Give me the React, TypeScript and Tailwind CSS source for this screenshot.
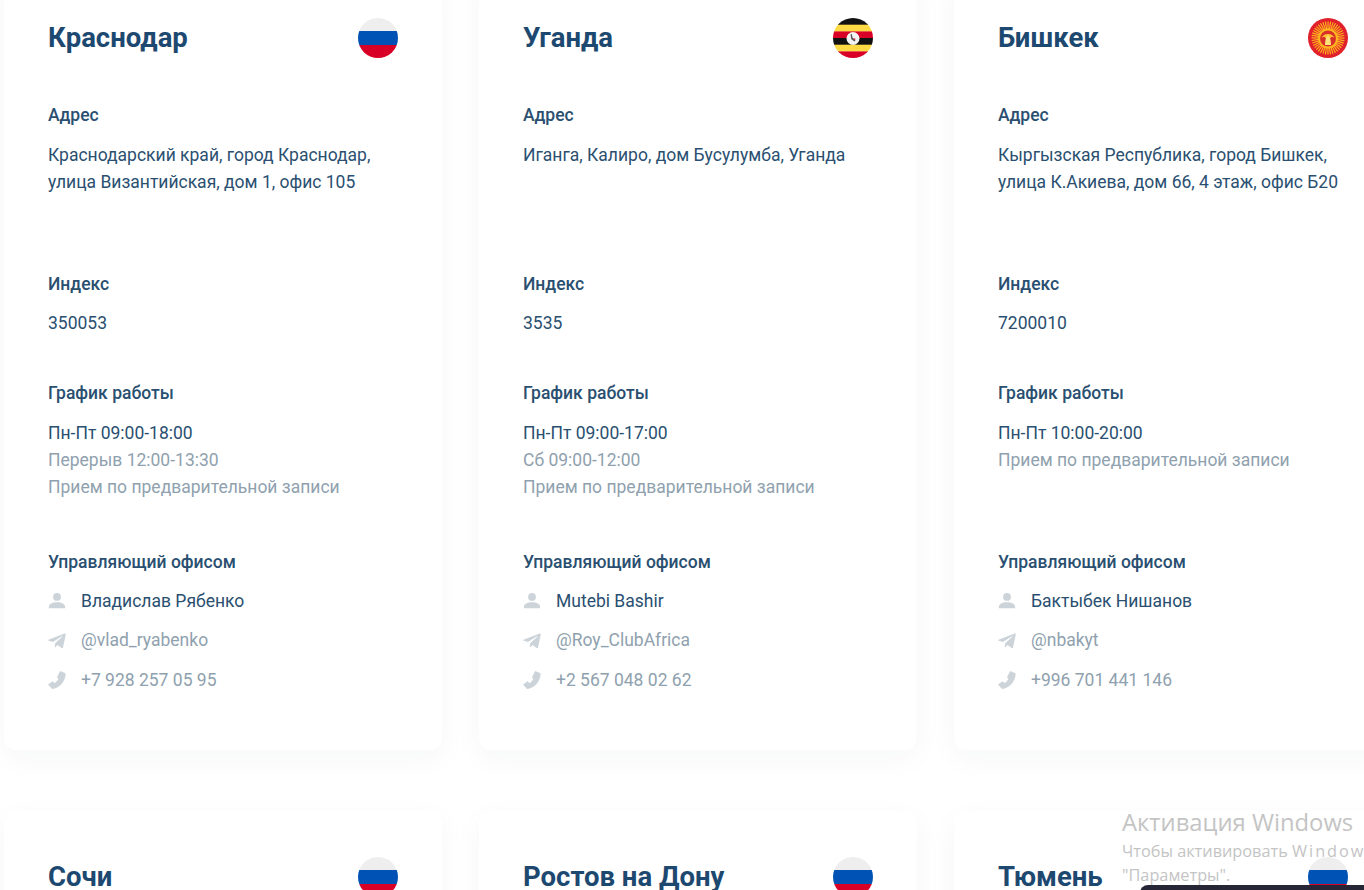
import { FaTelegramPlane } from 'react-icons/fa'

type Office = {
  city: string
  flag: 'ru' | 'ug' | 'kg'
  address: string[]
  zip: string
  hours: string[]
  manager: string
  telegram: string
  phone: string
}

const offices: Office[] = [
  {
    city: 'Краснодар',
    flag: 'ru',
    address: ['Краснодарский край, город Краснодар,', 'улица Византийская, дом 1, офис 105'],
    zip: '350053',
    hours: ['Пн-Пт 09:00-18:00', 'Перерыв 12:00-13:30', 'Прием по предварительной записи'],
    manager: 'Владислав Рябенко',
    telegram: '@vlad_ryabenko',
    phone: '+7 928 257 05 95',
  },
  {
    city: 'Уганда',
    flag: 'ug',
    address: ['Иганга, Калиро, дом Бусулумба, Уганда'],
    zip: '3535',
    hours: ['Пн-Пт 09:00-17:00', 'Сб 09:00-12:00', 'Прием по предварительной записи'],
    manager: 'Mutebi Bashir',
    telegram: '@Roy_ClubAfrica',
    phone: '+2 567 048 02 62',
  },
  {
    city: 'Бишкек',
    flag: 'kg',
    address: ['Кыргызская Республика, город Бишкек,', 'улица К.Акиева, дом 66, 4 этаж, офис Б20'],
    zip: '7200010',
    hours: ['Пн-Пт 10:00-20:00', 'Прием по предварительной записи'],
    manager: 'Бактыбек Нишанов',
    telegram: '@nbakyt',
    phone: '+996 701 441 146',
  },
]

const nextRow: { city: string; flag: Office['flag'] }[] = [
  { city: 'Сочи', flag: 'ru' },
  { city: 'Ростов на Дону', flag: 'ru' },
  { city: 'Тюмень', flag: 'ru' },
]

function Flag({ kind }: { kind: Office['flag'] }) {
  if (kind === 'ru') {
    return (
      <svg viewBox="0 0 40 40" className="h-10 w-10 shrink-0">
        <clipPath id="ru-clip">
          <circle cx="20" cy="20" r="20" />
        </clipPath>
        <g clipPath="url(#ru-clip)">
          <rect width="40" height="14" fill="#eeeeee" />
          <rect y="13" width="40" height="14" fill="#0052b4" />
          <rect y="27" width="40" height="13" fill="#d80027" />
        </g>
      </svg>
    )
  }
  if (kind === 'ug') {
    return (
      <svg viewBox="0 0 40 40" className="h-10 w-10 shrink-0">
        <clipPath id="ug-clip">
          <circle cx="20" cy="20" r="20" />
        </clipPath>
        <g clipPath="url(#ug-clip)">
          <rect width="40" height="7" fill="#111111" />
          <rect y="6.7" width="40" height="7" fill="#ffda44" />
          <rect y="13.4" width="40" height="7" fill="#d80027" />
          <rect y="20" width="40" height="7" fill="#111111" />
          <rect y="26.7" width="40" height="7" fill="#ffda44" />
          <rect y="33.4" width="40" height="7" fill="#d80027" />
        </g>
        <circle cx="20" cy="20.500" r="6.500" fill="#f4f4f4" />
        <path d="M17.500 16.500l1.200-.5 1 4 2.800 2.500-1 1-3.200-2.200z" fill="#555555" />
        <path d="M20 20l2.500.8-.5 1.400z" fill="#d80027" />
      </svg>
    )
  }
  const rays = Array.from({ length: 40 }, (_, i) => (i * 360) / 40)
  return (
    <svg viewBox="0 0 40 40" className="h-10 w-10 shrink-0">
      <circle cx="20" cy="20" r="20" fill="#e0202a" />
      {rays.map((angle) => (
        <rect key={angle} x="19.500" y="3.500" width="1.100" height="9" fill="#ffb81f" transform={`rotate(${angle} 20 20)`} />
      ))}
      <circle cx="20" cy="20.500" r="10" fill="#ffb81f" />
      <circle cx="20" cy="20.500" r="8" fill="#d9302a" />
      <path d="M13.500 20c2-5.500 11-5.500 13 0-3-2.500-4-2-6.500 6-2.500-8-3.500-8.500-6.500-6z" fill="#ffc93a" />
      <path d="M17 27c0-5 1-8 3-9 2 1 3 4 3 9z" fill="#ffe27a" />
    </svg>
  )
}

function UserIcon() {
  return (
    <svg viewBox="0 0 20 20" className="h-[18px] w-[18px] shrink-0" fill="currentColor">
      <circle cx="10" cy="5.500" r="4.300" />
      <path d="M1 18v-1.500c0-3 3.500-5 9-5s9 2 9 5V18z" />
    </svg>
  )
}

function PhoneIcon() {
  return (
    <svg viewBox="0 0 20 20" className="h-[18px] w-[18px] shrink-0" fill="currentColor">
      <path d="M13.500 0l6 2.500C20 11 13 19 4.500 20L0 15l5-3.500 2.500 2c1.500-1 3-2.500 4-4.500L10 7z" />
    </svg>
  )
}

function CardHeader({ city, flag }: { city: string; flag: Office['flag'] }) {
  return (
    <div className="flex h-10 items-center justify-between">
      <h2 className="text-[27.500px] leading-10 font-bold text-[#1d4971]">{city}</h2>
      <Flag kind={flag} />
    </div>
  )
}

function Section({ title, className, children }: { title: string; className: string; children: React.ReactNode }) {
  return (
    <div className={className}>
      <h3 className="mb-[13px] text-[17.500px] leading-[27px] font-medium text-[#2a4f70]">{title}</h3>
      {children}
    </div>
  )
}

function OfficeCard({ office }: { office: Office }) {
  return (
    <div className="h-[778px] w-[438px] shrink-0 rounded-xl bg-white pt-[46px] pr-11 pl-11 shadow-[0_8px_30px_rgba(30,50,80,0.04)]">
      <CardHeader city={office.city} flag={office.flag} />
      <div className="mt-11">
        <Section title="Адрес" className="h-[169px]">
          {office.address.map((line) => (
            <p key={line} className="whitespace-nowrap text-[17.500px] leading-[27px] text-[#2a4f70]">{line}</p>
          ))}
        </Section>
        <Section title="Индекс" className="h-[109px]">
          <p className="-mt-px text-[17.500px] leading-[27px] text-[#2a4f70]">{office.zip}</p>
        </Section>
        <Section title="График работы" className="h-[169px]">
          {office.hours.map((line, i) => (
            <p key={line} className={i === 0 ? 'text-[17.500px] leading-[27px] text-[#2a4f70]' : 'text-[17.500px] leading-[27px] text-[#8fa1ae]'}>
              {line}
            </p>
          ))}
        </Section>
        <h3 className="mb-[5px] text-[17.500px] leading-[27px] font-medium text-[#2a4f70]">Управляющий офисом</h3>
        <div className="flex h-10 items-center gap-[15px] text-[17.500px] text-[#2a4f70]">
          <span className="flex w-[18px] justify-center text-[#ccd4da]"><UserIcon /></span>
          {office.manager}
        </div>
        <div className="flex h-[39px] items-center gap-[15px] text-[17.500px] text-[#8fa1ae]">
          <span className="flex w-[18px] justify-center text-[#ccd4da]"><FaTelegramPlane size={20} className="shrink-0" /></span>
          {office.telegram}
        </div>
        <div className="flex h-[39.500px] items-center gap-[15px] text-[17.500px] text-[#8fa1ae]">
          <span className="flex w-[18px] justify-center text-[#ccd4da]"><PhoneIcon /></span>
          {office.phone}
        </div>
      </div>
    </div>
  )
}

export default function App() {
  return (
    <div className="relative h-[890px] w-[1364px] overflow-hidden bg-white font-['Roboto',sans-serif]">
      <div className="-mt-7 ml-1 flex flex-col gap-[61px]">
        <div className="flex gap-[37px]">
          {offices.map((office) => (
            <OfficeCard key={office.city} office={office} />
          ))}
        </div>
        <div className="flex gap-[37px]">
          {nextRow.map((item) => (
            <div key={item.city} className="h-[778px] w-[438px] shrink-0 rounded-xl bg-white pt-[46px] pr-11 pl-11 shadow-[0_8px_30px_rgba(30,50,80,0.04)]">
              <CardHeader city={item.city} flag={item.flag} />
            </div>
          ))}
        </div>
      </div>

      {/* windows watermark + chat widget poking in at the bottom */}
      <div className="absolute top-[806px] left-[1122px] whitespace-nowrap font-['Open_Sans',sans-serif] text-[#c4c4c4]">
        <p className="text-[23.800px] leading-[33px]">Активация Windows</p>
        <p className="text-[16.300px] leading-[24px]">
          Чтобы активировать <span className="tracking-[2px]">Window</span>
        </p>
        <p className="text-[16.300px] leading-[24px]">"Параметры".</p>
      </div>
      <div className="absolute top-[885px] left-[1140px] h-10 w-[300px] rounded-lg bg-[#262636]" />
    </div>
  )
}
